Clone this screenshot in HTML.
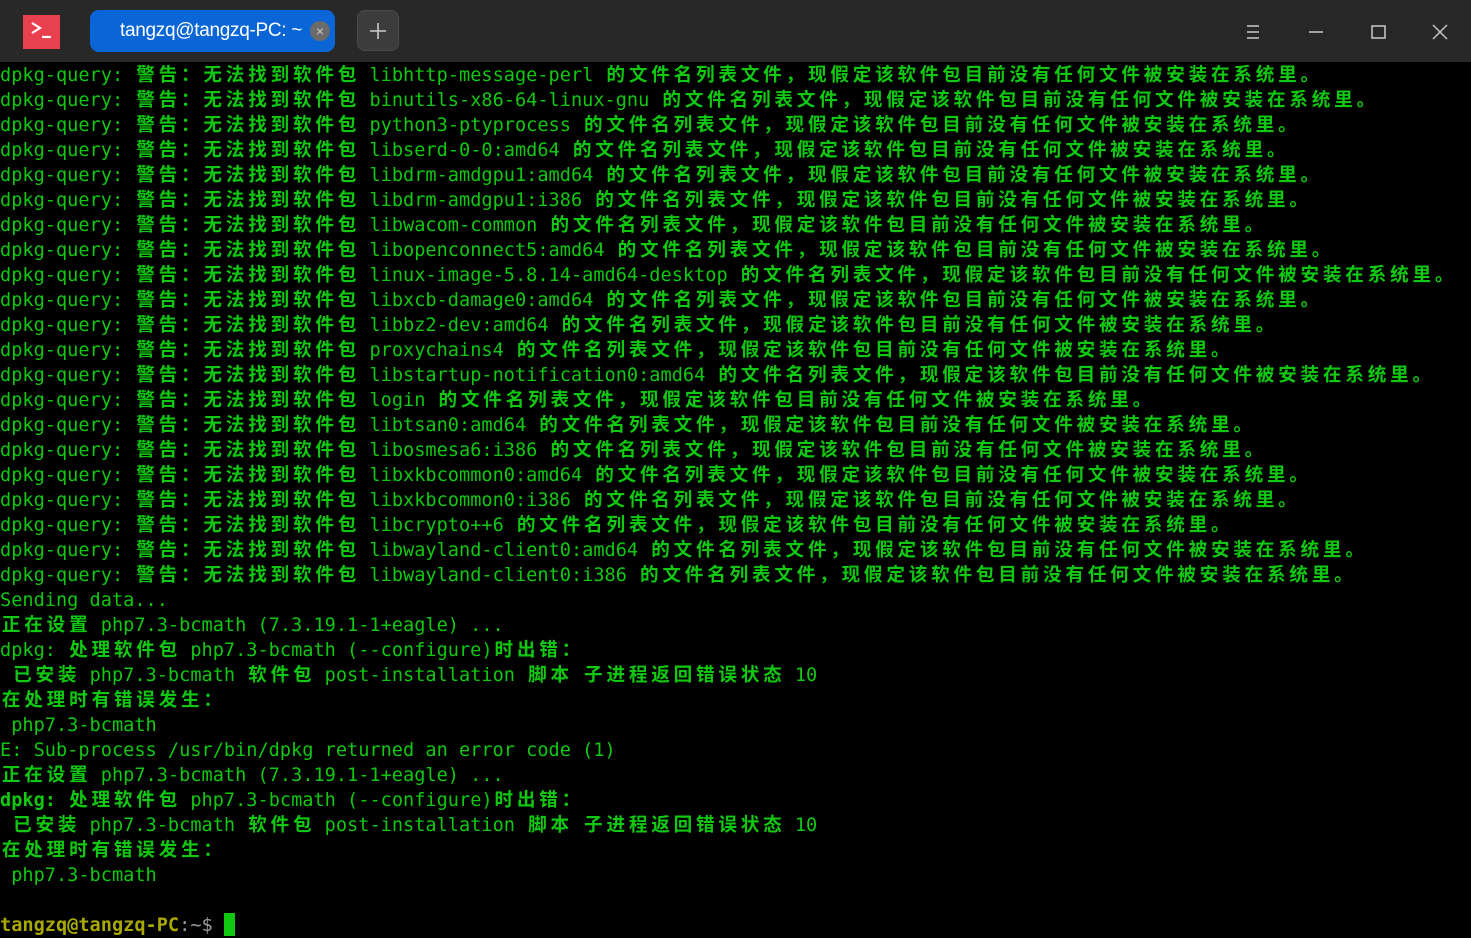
<!DOCTYPE html>
<html><head><meta charset="utf-8"><style>
body{margin:0;width:1471px;height:938px;background:#000;overflow:hidden;position:relative;font-family:"DejaVu Sans Mono","Noto Sans CJK SC",monospace}
#bar{position:absolute;left:0;top:0;width:1471px;height:62px;background:#282828}
#logo{position:absolute;left:23px;top:15px;width:37px;height:34px;background:#e8404f}
#tab{position:absolute;left:90px;top:10px;width:245px;height:42px;background:#0a66d6;border-radius:9px;color:#fff;font:19px "Liberation Sans","Noto Sans CJK SC",sans-serif;line-height:42px;overflow:hidden;letter-spacing:-0.3px}
#tab span{position:absolute;left:30px}
#tabx{position:absolute;left:220px;top:11px;width:20px;height:20px;border-radius:50%;background:#6b6b6b;color:#ccc;font-size:14px;line-height:20px;text-align:center;letter-spacing:0}
#plus{position:absolute;left:357px;top:10px;width:42px;height:41px;background:#3c3c3c;border:1px solid #4a4a4a;border-radius:8px;box-sizing:border-box}
#t{position:absolute;left:0;top:63px;font-size:18.6px;line-height:25px;color:#10c810;white-space:pre}
.c{display:inline-block;width:22.4px;text-align:center;font-weight:bold}
.b{font-weight:bold}
</style></head><body>
<div id="bar">
<div id="logo"><svg width="37" height="34"><path d="M9 8l8 5-8 5" stroke="#fff" stroke-width="2.2" fill="none"/><path d="M19 22h9" stroke="#fff" stroke-width="2.2"/></svg></div>
<div id="tab"><span>tangzq@tangzq-PC: ~</span><div id="tabx">×</div></div>
<div id="plus"><svg width="40" height="40"><path d="M20 12v16M12 20h16" stroke="#ccc" stroke-width="1.6"/></svg></div>
<svg style="position:absolute;left:1240px;top:20px" width="220" height="24">
<path d="M7 6h12M7 12h12M7 18h12" stroke="#ccc" stroke-width="1.4"/>
<path d="M69 12h14" stroke="#ccc" stroke-width="1.5"/>
<rect x="132" y="6" width="13" height="12" stroke="#ccc" stroke-width="1.5" fill="none"/>
<path d="M193 5l14 14M207 5l-14 14" stroke="#ccc" stroke-width="1.4"/>
</svg>
</div>
<div id="t">dpkg-query: 警告：无法找到软件包 libhttp-message-perl 的文件名列表文件，现假定该软件包目前没有任何文件被安装在系统里。
dpkg-query: 警告：无法找到软件包 binutils-x86-64-linux-gnu 的文件名列表文件，现假定该软件包目前没有任何文件被安装在系统里。
dpkg-query: 警告：无法找到软件包 python3-ptyprocess 的文件名列表文件，现假定该软件包目前没有任何文件被安装在系统里。
dpkg-query: 警告：无法找到软件包 libserd-0-0:amd64 的文件名列表文件，现假定该软件包目前没有任何文件被安装在系统里。
dpkg-query: 警告：无法找到软件包 libdrm-amdgpu1:amd64 的文件名列表文件，现假定该软件包目前没有任何文件被安装在系统里。
dpkg-query: 警告：无法找到软件包 libdrm-amdgpu1:i386 的文件名列表文件，现假定该软件包目前没有任何文件被安装在系统里。
dpkg-query: 警告：无法找到软件包 libwacom-common 的文件名列表文件，现假定该软件包目前没有任何文件被安装在系统里。
dpkg-query: 警告：无法找到软件包 libopenconnect5:amd64 的文件名列表文件，现假定该软件包目前没有任何文件被安装在系统里。
dpkg-query: 警告：无法找到软件包 linux-image-5.8.14-amd64-desktop 的文件名列表文件，现假定该软件包目前没有任何文件被安装在系统里。
dpkg-query: 警告：无法找到软件包 libxcb-damage0:amd64 的文件名列表文件，现假定该软件包目前没有任何文件被安装在系统里。
dpkg-query: 警告：无法找到软件包 libbz2-dev:amd64 的文件名列表文件，现假定该软件包目前没有任何文件被安装在系统里。
dpkg-query: 警告：无法找到软件包 proxychains4 的文件名列表文件，现假定该软件包目前没有任何文件被安装在系统里。
dpkg-query: 警告：无法找到软件包 libstartup-notification0:amd64 的文件名列表文件，现假定该软件包目前没有任何文件被安装在系统里。
dpkg-query: 警告：无法找到软件包 login 的文件名列表文件，现假定该软件包目前没有任何文件被安装在系统里。
dpkg-query: 警告：无法找到软件包 libtsan0:amd64 的文件名列表文件，现假定该软件包目前没有任何文件被安装在系统里。
dpkg-query: 警告：无法找到软件包 libosmesa6:i386 的文件名列表文件，现假定该软件包目前没有任何文件被安装在系统里。
dpkg-query: 警告：无法找到软件包 libxkbcommon0:amd64 的文件名列表文件，现假定该软件包目前没有任何文件被安装在系统里。
dpkg-query: 警告：无法找到软件包 libxkbcommon0:i386 的文件名列表文件，现假定该软件包目前没有任何文件被安装在系统里。
dpkg-query: 警告：无法找到软件包 libcrypto++6 的文件名列表文件，现假定该软件包目前没有任何文件被安装在系统里。
dpkg-query: 警告：无法找到软件包 libwayland-client0:amd64 的文件名列表文件，现假定该软件包目前没有任何文件被安装在系统里。
dpkg-query: 警告：无法找到软件包 libwayland-client0:i386 的文件名列表文件，现假定该软件包目前没有任何文件被安装在系统里。
Sending data...
正在设置 php7.3-bcmath (7.3.19.1-1+eagle) ...
dpkg: 处理软件包 php7.3-bcmath (--configure)时出错：
 已安装 php7.3-bcmath 软件包 post-installation 脚本 子进程返回错误状态 10
在处理时有错误发生：
 php7.3-bcmath
E: Sub-process /usr/bin/dpkg returned an error code (1)
正在设置 php7.3-bcmath (7.3.19.1-1+eagle) ...
<span class="b">dpkg:</span> 处理软件包 php7.3-bcmath (--configure)时出错：
 已安装 php7.3-bcmath 软件包 post-installation 脚本 子进程返回错误状态 10
在处理时有错误发生：
 php7.3-bcmath

<span class="b" style="color:#a8a800">tangzq@tangzq-PC</span><span style="color:#9a9a9a">:~$</span> <span style="display:inline-block;width:11px;height:23px;background:#10c810;vertical-align:-5px"></span></div>
<script>
(function(){
function walk(n){
 for(var ch=Array.from(n.childNodes),i=0;i<ch.length;i++){
  var c=ch[i];
  if(c.nodeType==3){
   var s=c.nodeValue;if(!/[\u2e80-\uffef]/.test(s))continue;
   var f=document.createDocumentFragment(),buf='';
   for(var k of s){
    if(/[\u2e80-\uffef]/.test(k)){if(buf){f.appendChild(document.createTextNode(buf));buf='';}
     var sp=document.createElement('span');sp.className='c';sp.textContent=k;f.appendChild(sp);}
    else buf+=k;
   }
   if(buf)f.appendChild(document.createTextNode(buf));
   n.replaceChild(f,c);
  }else if(c.nodeType==1)walk(c);
 }
}
walk(document.getElementById('t'));
})();
</script>
</body></html>
